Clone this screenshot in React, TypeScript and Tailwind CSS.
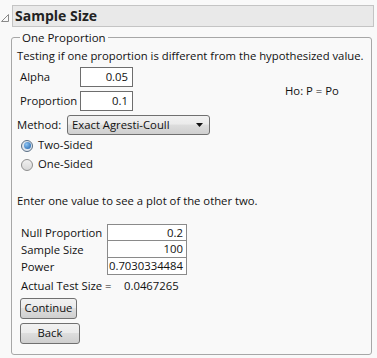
import React from "react";

const font = "font-['Segoe_UI','Open_Sans','Noto_Sans',sans-serif]";

function NumBox({ value, width = "w-[53px]" }: { value: string; width?: string }) {
  return (
    <div
      className={`${width} h-[20px] border border-[#6e6e6e] bg-white flex items-center justify-end pr-[4px] text-[#111]`}
    >
      {value}
    </div>
  );
}

function Radio({ checked, label }: { checked?: boolean; label: string }) {
  return (
    <div className="flex items-center h-[19px] gap-[5px] pl-[4px]">
      <span
        className={`w-[12px] h-[12px] rounded-full border flex items-center justify-center ${
          checked ? "border-[#5a6f85] bg-[#dfe6ee]" : "border-[#8e8f8f] bg-[linear-gradient(#f0f0f0,#d8d8d8)]"
        }`}
      >
        {checked && <span className="w-[7px] h-[7px] rounded-full bg-[radial-gradient(circle_at_35%_35%,#8cc4f4,#1d5ea8)]" />}
      </span>
      <span className="text-[#111]">{label}</span>
    </div>
  );
}

function Btn({ label, width }: { label: string; width: string }) {
  return (
    <button
      className={`${width} h-[21px] rounded-[3px] border border-[#707070] bg-[linear-gradient(#f2f2f2,#ebebeb_45%,#dddddd_50%,#cfcfcf)] text-[#111] flex items-center justify-center`}
    >
      {label}
    </button>
  );
}

const rows = [
  { label: "Null Proportion", value: "0.2" },
  { label: "Sample Size", value: "100" },
  { label: "Power", value: "0.7030334484" },
];

export default function App() {
  return (
    <div className={`w-[377px] h-[358px] bg-[#f9f9f9] ${font} text-[11.3px] text-[#111] overflow-hidden`}>
      {/* header */}
      <div className="flex items-start pt-[5px]">
        <svg width="12" height="22" viewBox="0 0 12 22" className="shrink-0">
          <path d="M1.5 16.5 L8.5 9.5 L8.5 16.5 Z" fill="none" stroke="#8a8a8a" strokeWidth="1" />
        </svg>
        <div className="w-[362px] h-[22px] border border-[#c4c4c4] bg-[#e9e9e9] flex items-center pl-[2px]">
          <span className="text-[14px] font-bold text-[#222] leading-none">Sample Size</span>
        </div>
      </div>

      {/* group box */}
      <fieldset className="ml-[11px] mt-[3px] w-[361px] h-[325px] border border-[#a7a7a7] rounded-[3px] px-[5px] pt-[0px] min-w-0">
        <legend className="ml-[3px] px-[2px] text-[11.5px] leading-[15px]">One Proportion</legend>

        <div className="mt-[3px] leading-[15px] whitespace-nowrap">
          Testing if one proportion is different from the hypothesized value.
        </div>

        <div className="flex mt-[4px]">
          <div className="flex flex-col gap-[4px]">
            <div className="flex items-center">
              <span className="w-[63px] pl-[3px]">Alpha</span>
              <NumBox value="0.05" />
            </div>
            <div className="flex items-center">
              <span className="w-[63px] pl-[3px]">Proportion</span>
              <NumBox value="0.1" />
            </div>
          </div>
          <div className="ml-[152px] mt-[16px]">Ho: P = Po</div>
        </div>

        <div className="flex items-center mt-[4px]">
          <span className="w-[50px]">Method:</span>
          <div className="w-[143px] h-[20px] rounded-[3px] border border-[#707070] bg-[linear-gradient(#f2f2f2,#ebebeb_45%,#dddddd_50%,#cfcfcf)] flex items-center justify-between pl-[4px] pr-[6px]">
            <span>Exact Agresti-Coull</span>
            <svg width="7" height="4" viewBox="0 0 7 4">
              <path d="M0 0 L7 0 L3.5 4 Z" fill="#111" />
            </svg>
          </div>
        </div>

        <div className="mt-[1px]">
          <Radio checked label="Two-Sided" />
          <Radio label="One-Sided" />
        </div>

        <div className="mt-[19px] leading-[15px]">Enter one value to see a plot of the other two.</div>

        <div className="mt-[16px] ml-[3px]">
          {rows.map((r, i) => (
            <div key={r.label} className="flex h-[17px]">
              <span className="w-[87px] pl-[1px] leading-[17px] whitespace-nowrap">{r.label}</span>
              <span
                className={`w-[80px] border-x border-b ${i === 0 ? "border-t" : ""} border-[#8a8a8a] bg-white text-right pr-[3px] leading-[16px] whitespace-nowrap`}
              >
                {r.value}
              </span>
            </div>
          ))}
          <div className="flex mt-[3px] leading-[15px]">
            <span className="w-[104px] pl-[1px] whitespace-nowrap">Actual Test Size =</span>
            <span>0.0467265</span>
          </div>
        </div>

        <div className="mt-[5px] ml-[3px] flex flex-col gap-[4px]">
          <Btn label="Continue" width="w-[57px]" />
          <Btn label="Back" width="w-[60px]" />
        </div>
      </fieldset>
    </div>
  );
}
